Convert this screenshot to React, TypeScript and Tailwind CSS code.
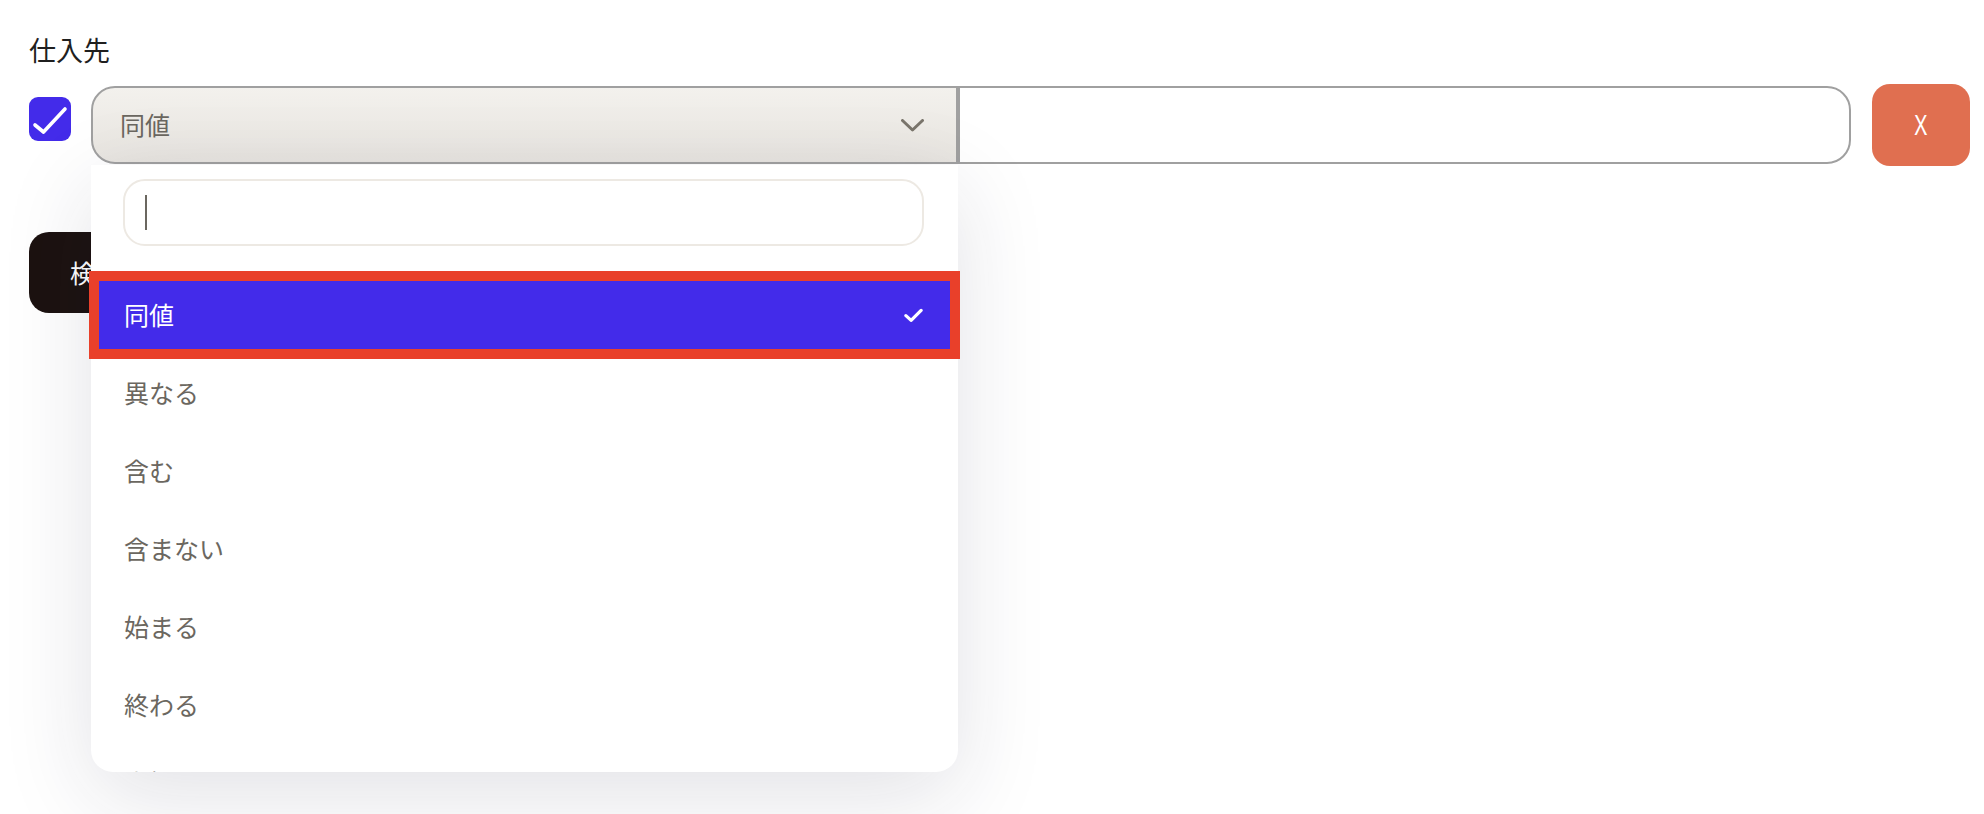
import { useState } from "react"

const OPTIONS = ["同値", "異なる", "含む", "含まない", "始まる", "終わる", "空欄"]

function ChevronIcon() {
  return (
    <svg width="23" height="13" viewBox="0 0 23 13" fill="none">
      <polyline points="1.5,1.5 11.5,11 21.5,1.5" stroke="#7a756c" strokeWidth="3" strokeLinecap="round" strokeLinejoin="round" />
    </svg>
  )
}

function CheckIcon({ size = 19 }: { size?: number }) {
  return (
    <svg width={size} height={size * 0.75} viewBox="0 0 20 15" fill="none">
      <polyline points="2,8 7.5,13 18,2.5" stroke="#fff" strokeWidth="3.4" strokeLinecap="round" strokeLinejoin="round" />
    </svg>
  )
}

export default function App() {
  const [selected] = useState("同値")
  const [checked] = useState(true)

  return (
    <div
      className="min-h-[814px] bg-white pl-[29px] pr-[14px] pt-[30px]"
      style={{ fontFamily: '"Noto Sans CJK JP", "Noto Sans", sans-serif' }}
    >
      <div className="text-[27px] leading-[40px] text-[#1f1f1f]">仕入先</div>

      <div className="mt-[14px] flex items-start">
        {/* checkbox */}
        <div className="mt-[13px] h-[44px] w-[42px] shrink-0 rounded-[9px] bg-[#432bea]">
          {checked && (
            <svg width="42" height="44" viewBox="0 0 42 44" fill="none">
              <polyline points="6,28 14.5,35 36,12" stroke="#fff" strokeWidth="3.6" strokeLinecap="round" strokeLinejoin="round" />
            </svg>
          )}
        </div>

        <div className="ml-[20px] flex h-[82px] flex-1 items-center">
          {/* select + dropdown */}
          <div className="relative w-[867px] shrink-0">
            <button className="flex h-[78px] w-full items-center justify-between rounded-l-[24px] border-2 border-[#a0a0a0] bg-gradient-to-b from-[#f3f1ed] to-[#e8e5e0] pl-[27px] pr-[32px] text-[25px] text-[#6b6760]">
              <span>{selected}</span>
              <ChevronIcon />
            </button>

            <div className="absolute left-0 top-full z-10 mt-[1px] h-[607px] w-[867px] rounded-b-[22px] bg-white shadow-[0_24px_90px_rgba(30,30,60,0.13)]">
              <div className="pl-[32px] pr-[34px] pt-[14px]">
                <div className="flex h-[67px] items-center rounded-[22px] border-2 border-[#ede9e3] pl-[20px]">
                  <div className="h-[35px] w-[2px] bg-[#6b6760]" />
                </div>
              </div>

              <div className="-mx-[10px] mt-[25px] h-[501px] overflow-hidden px-[10px] pt-[10px]">
                <div className="mx-[8px] flex flex-col gap-[10px]">
                  {OPTIONS.map((opt) =>
                    opt === selected ? (
                      <div
                        key={opt}
                        className="flex h-[68px] shrink-0 items-center justify-between bg-[#432bea] pl-[25px] pr-[27px] text-[25px] text-white shadow-[0_0_0_10px_#e9402a]"
                      >
                        <span>{opt}</span>
                        <CheckIcon />
                      </div>
                    ) : (
                      <div key={opt} className="flex h-[68px] shrink-0 items-center pl-[25px] text-[25px] text-[#6b6760]">
                        {opt}
                      </div>
                    )
                  )}
                </div>
              </div>
            </div>
          </div>

          <input
            className="h-[78px] flex-1 rounded-r-[24px] border-2 border-[#a0a0a0] bg-white px-4 text-[25px] outline-none"
            defaultValue=""
          />

          <button className="ml-[21px] flex h-[82px] w-[98px] shrink-0 items-center justify-center rounded-[18px] bg-[#e06f50] text-[27px] text-white" style={{ fontFamily: '"Noto Sans", sans-serif' }}>
            <span className="inline-block scale-x-[0.8]">X</span>
          </button>
        </div>
      </div>

      <button className="mt-[66px] flex h-[81px] items-center rounded-[20px] bg-[#1c1210] px-[41px] text-[25px] text-white">
        検索
      </button>
    </div>
  )
}
